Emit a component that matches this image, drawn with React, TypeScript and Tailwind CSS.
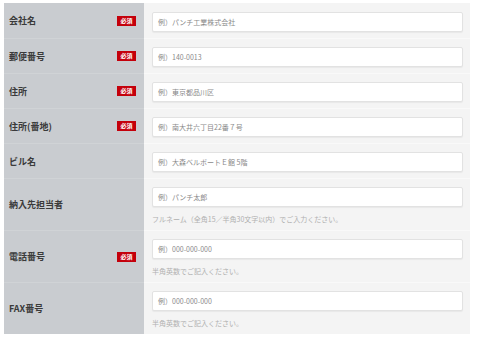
import React from "react";

type Row = { label: string; req: boolean; ph: string; help?: string };

const rows: Row[] = [
  { label: "会社名", req: true, ph: "例）パンチ工業株式会社" },
  { label: "郵便番号", req: true, ph: "例）140-0013" },
  { label: "住所", req: true, ph: "例）東京都品川区" },
  { label: "住所(番地)", req: true, ph: "例）南大井六丁目22番７号" },
  { label: "ビル名", req: false, ph: "例）大森ベルポートＥ館 5階" },
  { label: "納入先担当者", req: false, ph: "例）パンチ太郎", help: "フルネーム（全角15／半角30文字以内）でご入力ください。" },
  { label: "電話番号", req: true, ph: "例）000-000-000", help: "半角英数でご記入ください。" },
  { label: "FAX番号", req: false, ph: "例）000-000-000", help: "半角英数でご記入ください。" },
];

export default function App() {
  return (
    <div
      className="w-[477px] h-[344px] bg-white pt-[3px] pl-[4px] overflow-hidden"
      style={{ fontFamily: '"Noto Sans CJK JP", "Noto Sans", sans-serif' }}
    >
      <div className="w-[466px] flex flex-col">
        {rows.map((r, i) => (
          <div key={i} className="flex">
            <div
              className={`w-[140px] bg-[#c9ccd0] flex items-center justify-between pl-[5px] pr-[8px] ${
                i > 0 ? "border-t border-[#d0d3d6]" : ""
              }`}
            >
              <span className="text-[9px] font-semibold text-[#3a3a3a] leading-none">{r.label}</span>
              {r.req && (
                <span className="w-[19px] h-[10px] bg-[#c4000b] text-white text-[6px] font-bold flex items-center justify-center leading-none">
                  必須
                </span>
              )}
            </div>
            <div
              className={`flex-1 bg-[#f4f4f4] pl-[8px] pr-[7px] ${
                r.help ? "pt-[8px] pb-[4px]" : "pt-[8px] pb-[6px]"
              } ${i > 0 ? "border-t border-[#f9f9f9]" : "pt-[9px]"}`}
            >
              <div className="h-[20px] bg-white border border-[#e2e2e2] rounded-[2px] shadow-[0_1px_1px_rgba(0,0,0,0.05)] flex items-center pl-[5px]">
                <span className="text-[7px] text-[#8a8a8a] leading-none">{r.ph}</span>
              </div>
              {r.help && (
                <div className="mt-[5px] text-[7px] leading-[14px] text-[#b0b0b0]">{r.help}</div>
              )}
            </div>
          </div>
        ))}
      </div>
    </div>
  );
}
